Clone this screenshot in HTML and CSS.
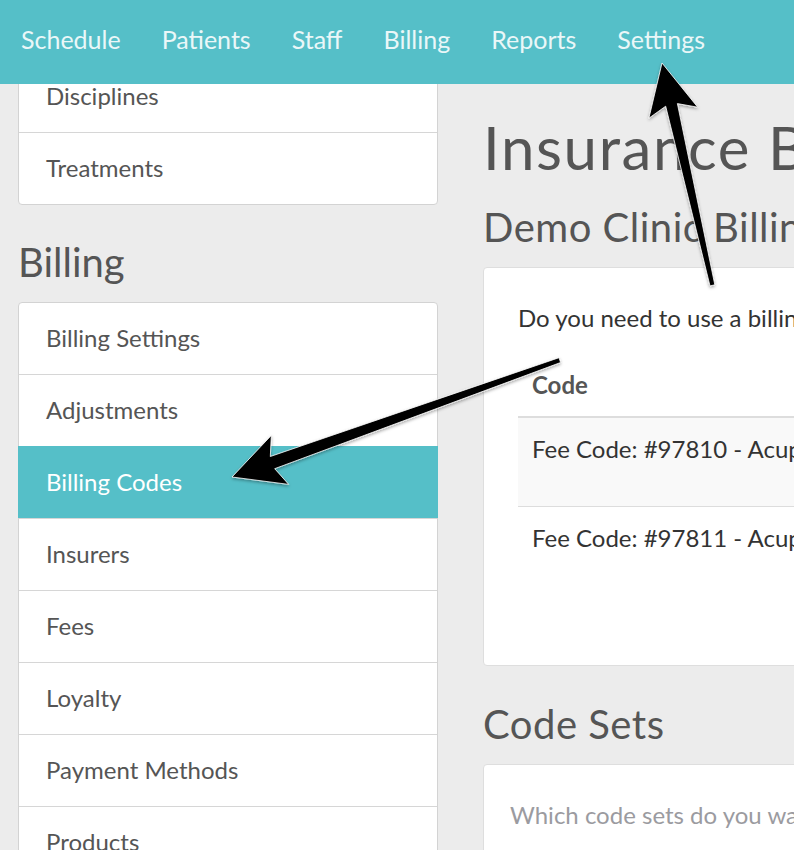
FILE: index.html
```html
<!DOCTYPE html>
<html>
<head>
<meta charset="utf-8">
<link rel="stylesheet" href="styles.css">
</head>
<body>
<nav class="topnav">
  <a class="nav-item">Schedule</a>
  <a class="nav-item">Patients</a>
  <a class="nav-item">Staff</a>
  <a class="nav-item">Billing</a>
  <a class="nav-item">Reports</a>
  <a class="nav-item">Settings</a>
</nav>
<div class="page">
  <aside class="sidebar">
    <ul class="list-card">
      <li class="list-row">Disciplines</li>
      <li class="list-row">Treatments</li>
    </ul>
    <h2 class="side-title">Billing</h2>
    <ul class="list-card">
      <li class="list-row">Billing Settings</li>
      <li class="list-row">Adjustments</li>
      <li class="list-row active">Billing Codes</li>
      <li class="list-row">Insurers</li>
      <li class="list-row">Fees</li>
      <li class="list-row">Loyalty</li>
      <li class="list-row">Payment Methods</li>
      <li class="list-row">Products</li>
    </ul>
  </aside>
  <main class="main">
    <h1 class="page-title">Insurance Billing</h1>
    <h3 class="section-title">Demo Clinic Billing Codes</h3>
    <section class="card card-codes">
      <p class="card-text">Do you need to use a billing code when invoicing insurers?</p>
      <table class="codes-table">
        <thead>
          <tr><th>Code</th><th>Description</th></tr>
        </thead>
        <tbody>
          <tr class="tall"><td>Fee Code: #97810 - Acupuncture</td><td>Acupuncture, 1 or more needles</td></tr>
          <tr><td>Fee Code: #97811 - Acupuncture</td><td>Additional 15 minutes</td></tr>
        </tbody>
      </table>
    </section>
    <h3 class="section-title sets-title">Code Sets</h3>
    <section class="card card-sets">
      <p class="card-text muted">Which code sets do you want to use?</p>
    </section>
  </main>
</div>
<svg class="annotations" width="794" height="850" viewBox="0 0 794 850">
  <defs>
    <filter id="shadow" x="-20%" y="-20%" width="140%" height="140%">
      <feDropShadow dx="0" dy="1.5" stdDeviation="1.5" flood-color="#000" flood-opacity="0.35"/>
    </filter>
  </defs>
  <g fill="#000" stroke="#fff" stroke-width="0.8" stroke-linejoin="round" filter="url(#shadow)">
    <polygon points="662,63 697.7,107.2 677.4,103.6 714.8,284.8 710,285.9 665.7,106.2 648.9,118.2"/>
    <polygon points="232,477 271.3,435.4 270.3,456.5 559,357.7 560.6,362.5 274.7,468.7 288.7,484.4"/>
  </g>
</svg>
</body>
</html>
```
FILE: styles.css
```css
html, body {
  margin: 0;
  padding: 0;
  overflow: hidden;
}
body {
  width: 794px;
  height: 850px;
  background: #ececec;
  font-family: "Lato", "Open Sans", sans-serif;
  color: #555;
  position: relative;
}
.topnav {
  position: absolute;
  top: 0;
  left: 0;
  right: 0;
  height: 84px;
  background: #55bfc8;
  display: flex;
  align-items: center;
  padding-left: 0.5px;
  z-index: 2;
}
.nav-item {
  color: #eaf7f8;
  font-size: 25px;
  padding: 0 20.5px;
  margin-top: -6px;
  white-space: nowrap;
}
.page {
  display: flex;
  align-items: flex-start;
  padding-left: 18px;
  padding-top: 60px;
}
.sidebar {
  width: 420px;
  flex: none;
}
.list-card {
  list-style: none;
  margin: 0;
  padding: 0;
  background: #fff;
  border: 1px solid #d3d3d3;
  border-radius: 4px;
}
.list-row {
  height: 71px;
  box-sizing: border-box;
  display: flex;
  align-items: center;
  padding: 0 27px 3px;
  font-size: 24px;
  color: #555;
  border-top: 1px solid #d6d6d6;
}
.list-row:first-child {
  border-top: none;
  height: 71px;
}
.list-row + .list-row {
  height: 72px;
}
.list-row.active {
  background: #55bfc8;
  color: #fff;
  margin: 0 -1px;
  padding: 0 28px 3px;
  border-top-color: #55bfc8;
}
.side-title {
  font-size: 40px;
  font-weight: 400;
  line-height: 44px;
  margin: 35px 0 18px;
  color: #555;
}
.main {
  margin-left: 45px;
  width: 640px;
  flex: none;
  white-space: nowrap;
}
.page-title {
  font-size: 60px;
  font-weight: 400;
  line-height: 66px;
  letter-spacing: 1.6px;
  margin: 54px 0 25px;
  color: #555;
}
.section-title {
  font-size: 40px;
  font-weight: 400;
  line-height: 44px;
  letter-spacing: 0.5px;
  margin: 0 0 18px;
  color: #555;
}
.sets-title {
  margin-top: 36px;
}
.card {
  background: #fff;
  border: 1px solid #dedede;
  border-radius: 4px;
}
.card-codes {
  padding: 34px 34px 0;
  height: 399px;
  box-sizing: border-box;
}
.card-text {
  margin: 0;
  font-size: 24px;
  line-height: 31px;
  color: #333;
}
.card-text.muted {
  color: #9b9ba0;
}
.codes-table {
  margin-top: 22px;
  border-collapse: collapse;
  width: 700px;
  font-size: 24px;
  color: #333;
}
.codes-table th {
  text-align: left;
  font-weight: 700;
  color: #555;
  padding: 15px 14px 16px;
  line-height: 30px;
  border-bottom: 2px solid #dddddd;
}
.codes-table td {
  padding: 16px 14px;
  line-height: 30px;
  vertical-align: top;
  border-bottom: 1px solid #dddddd;
}
.codes-table tbody tr:last-child td {
  border-bottom: none;
}
.codes-table tr.tall td {
  background: #f9f9f9;
  height: 56px;
}
.card-sets {
  padding: 34px 26px;
  height: 120px;
}
.annotations {
  position: absolute;
  top: 0;
  left: 0;
  z-index: 3;
  pointer-events: none;
}
```
